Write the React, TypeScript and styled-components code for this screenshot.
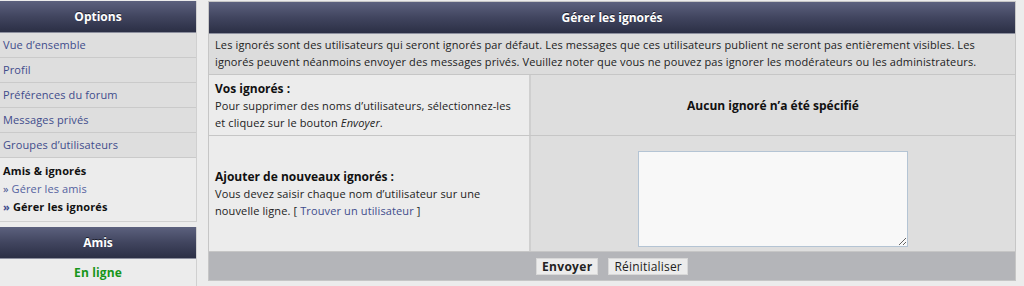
import React from 'react';
import styled, { createGlobalStyle } from 'styled-components';

const GlobalStyle = createGlobalStyle`
  html, body {
    margin: 0;
    padding: 0;
    background: #ececec;
    font-family: "Open Sans", "DejaVu Sans", sans-serif;
    font-size: 11px;
    letter-spacing: 0.12px;
    color: #222;
  }
`;

const Page = styled.div`
  display: flex;
  align-items: flex-start;
  gap: 11px;
  padding: 1px 8px 0 0;
  width: 1024px;
  height: 286px;
  box-sizing: border-box;
  overflow: hidden;
`;

const Sidebar = styled.div`
  width: 197px;
  flex: none;
  display: flex;
  flex-direction: column;
  gap: 5px;
`;

const Block = styled.div`
  border-right: 1px solid #d0d0d0;
  border-bottom: 1px solid #d0d0d0;
`;

const Header = styled.div`
  height: 31px;
  line-height: 31px;
  text-align: center;
  color: #fff;
  font-weight: bold;
  font-size: 12px;
  letter-spacing: 0;
  text-shadow: 0 -1px 0 #1c1f2e;
  background: linear-gradient(to bottom, #5c617e 0%, #41455f 50%, #2b2f45 100%);
  border-bottom: 1px solid #8c8f9e;
`;

const MenuItem = styled.a`
  display: block;
  height: 24px;
  line-height: 24px;
  padding-left: 3px;
  background: #dedede;
  border-bottom: 1px solid #cacaca;
  color: #3f4c8c;
  text-decoration: none;
`;

const SubMenu = styled.div`
  background: #ececec;
  padding: 4px 3px 5px;
  line-height: 18px;
`;

const SubTitle = styled.div`
  font-weight: bold;
  color: #111;
`;

const SubLink = styled.div<{ $active?: boolean }>`
  color: ${p => (p.$active ? '#111' : '#5562a0')};
  font-weight: ${p => (p.$active ? 'bold' : 'normal')};
  &::before {
    content: '» ';
    color: #3f4c8c;
  }
`;

const Online = styled.div`
  background: #ececec;
  text-align: center;
  color: #17961a;
  font-weight: bold;
  font-size: 12px;
  padding-top: 5px;
  height: 30px;
`;

const Panel = styled.div`
  flex: 1;
  border: 1px solid #c6c6c6;
  background: #ececec;
`;

const Intro = styled.div`
  background: #dcdcdc;
  padding: 3px 6px 4px;
  line-height: 16.5px;
  color: #222;
  border-bottom: 1px solid #c6c6c6;
`;

const Row = styled.div<{ $height: number }>`
  display: grid;
  grid-template-columns: 322px 1fr;
  height: ${p => p.$height}px;
  border-bottom: 1px solid #c6c6c6;
`;

const LeftCell = styled.div`
  background: #ececec;
  border-right: 2px solid #cfcfcf;
  padding: 0 6px;
  display: flex;
  flex-direction: column;
  justify-content: center;
  line-height: 17px;
`;

const RightCell = styled.div`
  background: #dedede;
  display: flex;
  align-items: center;
  justify-content: center;
`;

const Label = styled.div`
  font-weight: bold;
  font-size: 12px;
  letter-spacing: 0;
  color: #111;
`;

const Empty = styled.div`
  font-weight: bold;
  font-size: 12px;
  letter-spacing: 0;
  color: #111;
`;

const Link = styled.a`
  color: #3f4c8c;
  text-decoration: none;
`;

const Area = styled.textarea`
  width: 270px;
  height: 96px;
  box-sizing: border-box;
  margin-top: 10px;
  background: #f8f8f8;
  border: 1px solid #b4c4d4;
  resize: both;
`;

const Footer = styled.div`
  background: #b4b5b9;
  height: 28px;
  display: flex;
  align-items: center;
  justify-content: center;
  gap: 10px;
`;

const Button = styled.button<{ $primary?: boolean }>`
  font-family: "Open Sans", "DejaVu Sans", sans-serif;
  font-size: 12px;
  letter-spacing: ${p => (p.$primary ? '0.3px' : '0.2px')};
  font-weight: ${p => (p.$primary ? 'bold' : 'normal')};
  color: #222;
  background: #ececec;
  border: 1px solid #d8d8d8;
  padding: 0 5px;
  height: 17px;
  line-height: 15px;
`;

const App: React.FC = () => {
  return (
    <>
      <GlobalStyle />
      <Page>
        <Sidebar>
          <Block>
            <Header>Options</Header>
            <MenuItem>Vue d’ensemble</MenuItem>
            <MenuItem>Profil</MenuItem>
            <MenuItem>Préférences du forum</MenuItem>
            <MenuItem>Messages privés</MenuItem>
            <MenuItem>Groupes d’utilisateurs</MenuItem>
            <SubMenu>
              <SubTitle>Amis &amp; ignorés</SubTitle>
              <SubLink>Gérer les amis</SubLink>
              <SubLink $active>Gérer les ignorés</SubLink>
            </SubMenu>
          </Block>
          <Block>
            <Header>Amis</Header>
            <Online>En ligne</Online>
          </Block>
        </Sidebar>
        <Panel>
          <Header>Gérer les ignorés</Header>
          <Intro>
            Les ignorés sont des utilisateurs qui seront ignorés par défaut. Les messages que ces utilisateurs
            publient ne seront pas entièrement visibles. Les ignorés peuvent néanmoins envoyer des messages
            privés. Veuillez noter que vous ne pouvez pas ignorer les modérateurs ou les administrateurs.
          </Intro>
          <Row $height={60}>
            <LeftCell>
              <Label>Vos ignorés :</Label>
              <div>
                Pour supprimer des noms d’utilisateurs, sélectionnez-les et cliquez sur le bouton <i>Envoyer</i>.
              </div>
            </LeftCell>
            <RightCell>
              <Empty>Aucun ignoré n’a été spécifié</Empty>
            </RightCell>
          </Row>
          <Row $height={115}>
            <LeftCell>
              <Label>Ajouter de nouveaux ignorés :</Label>
              <div>
                Vous devez saisir chaque nom d’utilisateur sur une nouvelle ligne. [ <Link>Trouver un utilisateur</Link> ]
              </div>
            </LeftCell>
            <RightCell>
              <Area />
            </RightCell>
          </Row>
          <Footer>
            <Button $primary>Envoyer</Button>
            <Button>Réinitialiser</Button>
          </Footer>
        </Panel>
      </Page>
    </>
  );
};

export default App;
